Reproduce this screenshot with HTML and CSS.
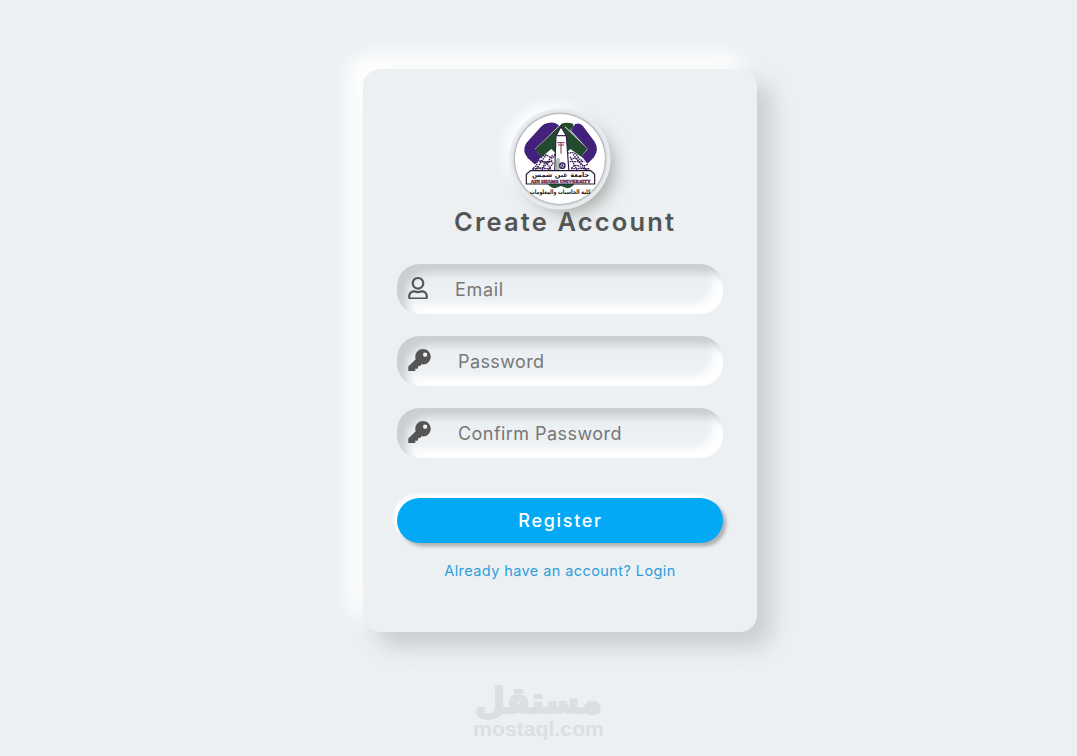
FILE: index.html
```html
<!DOCTYPE html>
<html lang="en">
<head>
<meta charset="utf-8">
<title>Create Account</title>
<link rel="stylesheet" href="styles.css">
</head>
<body>
<main class="card">
  <div class="logo">
    <svg viewBox="0 0 270 270" aria-label="Ain Shams University">
      <path d="M96 205H180Q174 222 156 223L138 216L120 223Q103 222 96 205Z" fill="#21532f"/>
      <path d="M138 30Q155 23 174 29L176 38L165 49L218 104L187 150H88L59 106L128 37Z" fill="#234a2c"/>
      <path d="M138 30L59 106L92 149M150 38L218 104L185 149" fill="none" stroke="#fff" stroke-width="3"/>
      <path d="M98 27Q119 22 132 35L60 105L98 153L82 172L38 132Q20 110 34 87L78 38Q86 29 98 27Z" fill="#43207c"/>
      <path d="M167 49L181 30Q193 25 203 35L239 83Q253 106 237 130L195 172L178 152L218 105Z" fill="#43207c"/>
      <path d="M48 183V166L76 132L109 105L138 132L166 105L204 132L230 166V183Z" fill="#fff"/>
      <g fill="none" stroke="#382055" stroke-width="4" stroke-dasharray="5 2">
        <path d="M54 177Q54 150 69 159T87 151T108 168M65 154Q66 133 83 142T111 138M78 132Q88 117 103 128T119 118M157 118Q179 111 188 127T203 137M168 137Q181 126 192 144T218 151M169 163Q180 149 193 157T226 170"/>
        <path d="M60 171L94 121M77 173L113 123M96 173L116 145M165 128L188 171M174 121L215 168M52 164H108M168 164H225M73 143H112M164 143H208"/>
      </g>
      <path d="M119 176L123 65L138 38L154 65L162 176Z" fill="#fff" stroke="#321d48" stroke-width="3.5"/>
      <path d="M124 65H153" stroke="#321d48" stroke-width="3.5"/>
      <path d="M127 86H149M129 93H147M138 86V119" stroke="#87314b" stroke-width="3"/>
      <path d="M126 134H133V171H123V145Z" fill="#afbdb5" stroke="#777" stroke-width="1"/>
      <circle cx="142" cy="155" r="8" fill="#fff" stroke="#38225f" stroke-width="4"/>
      <path d="M135 151L149 159M139 162L145 148" stroke="#38225f" stroke-width="3"/>
      <path d="M34 210V181L47 170H227L239 181V210Z" fill="#fff" stroke="#251832" stroke-width="3.5"/>
      <text x="137" y="190" class="emblem-arabic" textLength="172" lengthAdjust="spacingAndGlyphs">جامعة عين شمس</text>
      <text x="137" y="206" class="emblem-latin" textLength="180" lengthAdjust="spacingAndGlyphs">AIN SHAMS UNIVERSITY</text>
      <text x="136" y="241" class="faculty" textLength="182" lengthAdjust="spacingAndGlyphs">كلية الحاسبات والمعلومات</text>
    </svg>
  </div>
  <h1 class="title"><span>Create Account</span></h1>
  <form class="form">
    <label class="field">
      <svg class="icon user" viewBox="0 0 448 512"><path d="M313.6 304c-28.7 0-42.5 16-89.6 16-47.1 0-60.8-16-89.6-16C60.2 304 0 364.2 0 438.4V464c0 26.5 21.5 48 48 48h352c26.5 0 48-21.5 48-48v-25.6c0-74.2-60.2-134.4-134.4-134.4zM400 464H48v-25.6c0-47.6 38.8-86.4 86.4-86.4 14.6 0 38.3 16 89.6 16 51.7 0 74.9-16 89.6-16 47.6 0 86.4 38.8 86.4 86.4V464zM224 288c79.5 0 144-64.5 144-144S303.5 0 224 0 80 64.5 80 144s64.5 144 144 144zm0-240c52.9 0 96 43.1 96 96s-43.1 96-96 96-96-43.1-96-96 43.1-96 96-96z"/></svg>
      <input class="input email" type="email" placeholder="Email">
    </label>
    <label class="field">
      <svg class="icon" viewBox="0 0 512 512"><path d="M512 176.001C512 273.203 433.202 352 336 352c-11.22 0-22.19-1.062-32.827-3.069l-24.012 27.014A23.999 23.999 0 0 1 261.223 384H224v40c0 13.255-10.745 24-24 24h-40v40c0 13.255-10.745 24-24 24H24c-13.255 0-24-10.745-24-24v-78.059c0-6.365 2.529-12.47 7.029-16.971l161.802-161.802C163.108 213.814 160 195.271 160 176 160 78.798 238.797.001 335.999 0 433.488-.001 512 78.511 512 176.001zM336 128c0 26.51 21.49 48 48 48s48-21.49 48-48-21.49-48-48-48-48 21.49-48 48z"/></svg>
      <input class="input password" type="password" placeholder="Password">
    </label>
    <label class="field">
      <svg class="icon" viewBox="0 0 512 512"><path d="M512 176.001C512 273.203 433.202 352 336 352c-11.22 0-22.19-1.062-32.827-3.069l-24.012 27.014A23.999 23.999 0 0 1 261.223 384H224v40c0 13.255-10.745 24-24 24h-40v40c0 13.255-10.745 24-24 24H24c-13.255 0-24-10.745-24-24v-78.059c0-6.365 2.529-12.47 7.029-16.971l161.802-161.802C163.108 213.814 160 195.271 160 176 160 78.798 238.797.001 335.999 0 433.488-.001 512 78.511 512 176.001zM336 128c0 26.51 21.49 48 48 48s48-21.49 48-48-21.49-48-48-48-48 21.49-48 48z"/></svg>
      <input class="input confirm" type="password" placeholder="Confirm Password">
    </label>
    <button class="submit" type="button">Register</button>
  </form>
  <a class="login" href="#">Already have an account? Login</a>
</main>
<svg class="watermark" viewBox="0 0 200 86" aria-label="mostaql">
  <text class="mark-arabic" x="98.5" y="43" textLength="127" lengthAdjust="spacingAndGlyphs">مستقل</text>
  <text class="mark-latin" x="98.5" y="66" textLength="131" lengthAdjust="spacingAndGlyphs">mostaql.com</text>
</svg>
</body>
</html>
```

FILE: styles.css
```css
* { box-sizing: border-box; }
body {
  margin: 0;
  height: 756px;
  overflow: hidden;
  padding-top: 69px;
  display: flex;
  flex-direction: column;
  align-items: center;
  background: #ecf0f3;
  font-family: Inter, "Liberation Sans", sans-serif;
}
.card {
  width: 394px;
  height: 563px;
  flex: none;
  margin-left: 43px;
  padding: 45px 34px 0;
  border-radius: 17px;
  background: #ecf0f3;
  box-shadow: 14.6px 14.6px 22.5px #cbced1, -14.6px -14.6px 22.5px #fff;
}
.logo {
  width: 90px;
  height: 90px;
  margin: 0 auto;
  border-radius: 50%;
  background: #fff;
  box-shadow: 0 0 3px #5f5f5f, 0 0 0 5.6px #e8ecef, 9px 9px 17px #a7aaa7, -9px -9px 17px #fff;
}
.logo svg { display: block; width: 90px; height: 90px; }
.emblem-arabic, .emblem-latin, .faculty, .mark-arabic, .mark-latin { text-anchor: middle; }
.emblem-arabic { font: bold 20px "DejaVu Sans", sans-serif; fill: #28222e; }
.emblem-latin { font: bold 14px "Liberation Serif", serif; fill: #641c42; stroke: #641c42; stroke-width: 1px; }
.faculty { font: bold 19px "DejaVu Sans", sans-serif; fill: #222; }
.title {
  margin: 0 0 0 57px;
  height: 60px;
  color: #555;
  font-size: 25.5px;
  font-weight: 600;
  line-height: 36px;
  letter-spacing: 2.13px;
  white-space: nowrap;
}
.form { display: flex; flex-direction: column; gap: 22px; }
.field {
  display: flex;
  align-items: center;
  height: 50px;
  padding-left: 11px;
  border-radius: 22.5px;
  box-shadow: inset 9px 9px 9px #cbced1, inset -9px -9px 9px #fff;
}
.icon { width: 23px; height: 22.5px; flex: none; margin-bottom: 2px; fill: #555; }
.icon.user { width: 20px; }
.input {
  min-width: 0;
  flex: 1;
  margin: 0 0 0 27px;
  padding: 0;
  border: 0;
  outline: 0;
  background: transparent;
  font: 18px Inter, sans-serif;
}
.input::placeholder { color: #777; opacity: 1; }
.email { letter-spacing: .65px; }
.password { letter-spacing: .4px; }
.confirm { letter-spacing: .45px; }
.submit {
  height: 45px;
  margin: 18px 0 0;
  padding: 0 0 0 1px;
  border: 0;
  border-radius: 22.5px;
  background: #03a9f4;
  color: #fff;
  font: 500 18px Inter, sans-serif;
  letter-spacing: 1.7px;
  box-shadow: 3.4px 3.4px 3.4px #b1b1b1, -3.4px -3.4px 3.4px #fff;
}
.login {
  display: block;
  margin-top: 18px;
  text-align: center;
  color: #2f9ed8;
  font-size: 14.5px;
  line-height: 20px;
  letter-spacing: .42px;
  text-decoration: none;
  white-space: nowrap;
}
.watermark { width: 200px; height: 86px; flex: none; margin: 38px 0 0 3px; fill: #dbdfe1; }
.mark-arabic {
  font: bold 36px "DejaVu Sans", sans-serif;
  stroke: #dbdfe1;
  stroke-width: 2px;
  stroke-linejoin: round;
}
.mark-latin { font: bold 21px "Liberation Sans", sans-serif; }
```
